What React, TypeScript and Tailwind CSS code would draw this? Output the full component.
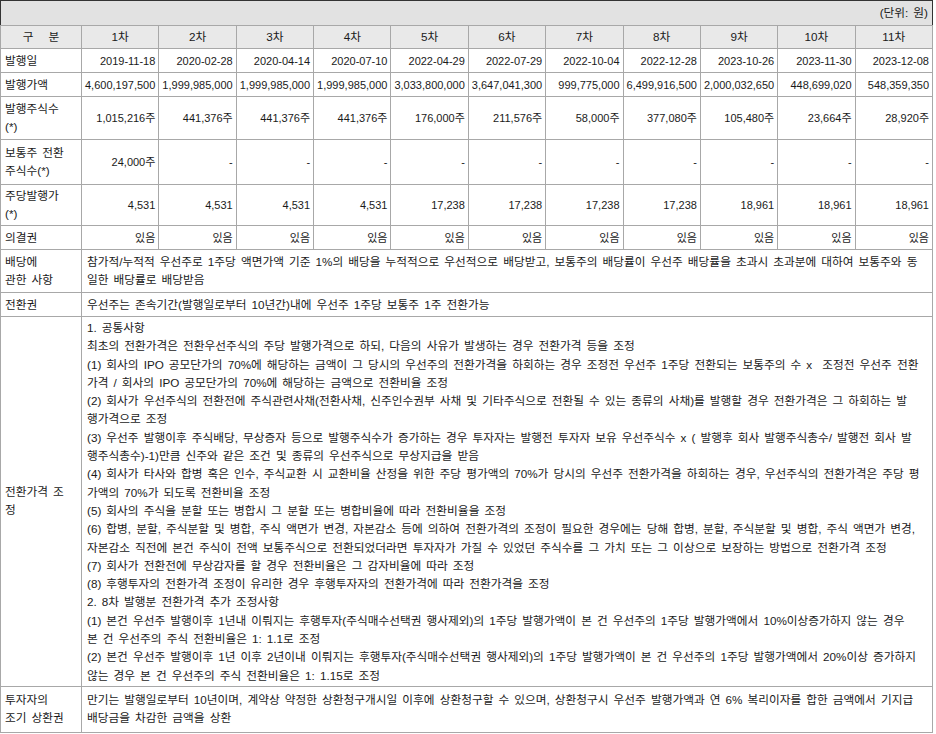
import React from "react";

const rounds = ["1차", "2차", "3차", "4차", "5차", "6차", "7차", "8차", "9차", "10차", "11차"];

const numericRows: { label: React.ReactNode; values: string[]; h: string }[] = [
  {
    label: "발행일",
    h: "h-[24px]",
    values: ["2019-11-18", "2020-02-28", "2020-04-14", "2020-07-10", "2022-04-29", "2022-07-29", "2022-10-04", "2022-12-28", "2023-10-26", "2023-11-30", "2023-12-08"],
  },
  {
    label: "발행가액",
    h: "h-[24px]",
    values: ["4,600,197,500", "1,999,985,000", "1,999,985,000", "1,999,985,000", "3,033,800,000", "3,647,041,300", "999,775,000", "6,499,916,500", "2,000,032,650", "448,699,020", "548,359,350"],
  },
  {
    label: (<>발행주식수<br />(*)</>),
    h: "h-[43px]",
    values: ["1,015,216주", "441,376주", "441,376주", "441,376주", "176,000주", "211,576주", "58,000주", "377,080주", "105,480주", "23,664주", "28,920주"],
  },
  {
    label: (<>보통주 전환<br />주식수(*)</>),
    h: "h-[45px]",
    values: ["24,000주", "-", "-", "-", "-", "-", "-", "-", "-", "-", "-"],
  },
  {
    label: (<>주당발행가<br />(*)</>),
    h: "h-[41px]",
    values: ["4,531", "4,531", "4,531", "4,531", "17,238", "17,238", "17,238", "17,238", "18,961", "18,961", "18,961"],
  },
  {
    label: "의결권",
    h: "h-[24px]",
    values: Array(11).fill("있음"),
  },
];

const adjustLines = [
  "1. 공통사항",
  "최초의 전환가격은 전환우선주식의 주당 발행가격으로 하되, 다음의 사유가 발생하는 경우 전환가격 등을 조정",
  "(1) 회사의 IPO 공모단가의 70%에 해당하는 금액이 그 당시의 우선주의 전환가격을 하회하는 경우 조정전 우선주 1주당 전환되는 보통주의 수 x  조정전 우선주 전환",
  "가격 / 회사의 IPO 공모단가의 70%에 해당하는 금액으로 전환비율 조정",
  "(2) 회사가 우선주식의 전환전에 주식관련사채(전환사채, 신주인수권부 사채 및 기타주식으로 전환될 수 있는 종류의 사채)를 발행할 경우 전환가격은 그 하회하는 발",
  "행가격으로 조정",
  "(3) 우선주 발행이후 주식배당, 무상증자 등으로 발행주식수가 증가하는 경우 투자자는 발행전 투자자 보유 우선주식수 x ( 발행후 회사 발행주식총수/ 발행전 회사 발",
  "행주식총수)-1)만큼 신주와 같은 조건 및 종류의 우선주식으로 무상지급을 받음",
  "(4) 회사가 타사와 합병 혹은 인수, 주식교환 시 교환비율 산정을 위한 주당 평가액의 70%가 당시의 우선주 전환가격을 하회하는 경우, 우선주식의 전환가격은 주당 평",
  "가액의 70%가 되도록 전환비율 조정",
  "(5) 회사의 주식을 분할 또는 병합시 그 분할 또는 병합비율에 따라 전환비율을 조정",
  "(6) 합병, 분할, 주식분할 및 병합, 주식 액면가 변경, 자본감소 등에 의하여 전환가격의 조정이 필요한 경우에는 당해 합병, 분할, 주식분할 및 병합, 주식 액면가 변경,",
  "자본감소 직전에 본건 주식이 전액 보통주식으로 전환되었더라면 투자자가 가질 수 있었던 주식수를 그 가치 또는 그 이상으로 보장하는 방법으로 전환가격 조정",
  "(7) 회사가 전환전에 무상감자를 할 경우 전환비율은 그 감자비율에 따라 조정",
  "(8) 후행투자의 전환가격 조정이 유리한 경우 후행투자자의 전환가격에 따라 전환가격을 조정",
  "2. 8차 발행분 전환가격 추가 조정사항",
  "(1) 본건 우선주 발행이후 1년내 이뤄지는 후행투자(주식매수선택권 행사제외)의 1주당 발행가액이 본 건 우선주의 1주당 발행가액에서 10%이상증가하지 않는 경우",
  "본 건 우선주의 주식 전환비율은 1: 1.1로 조정",
  "(2) 본건 우선주 발행이후 1년 이후 2년이내 이뤄지는 후행투자(주식매수선택권 행사제외)의 1주당 발행가액이 본 건 우선주의 1주당 발행가액에서 20%이상 증가하지",
  "않는 경우 본 건 우선주의 주식 전환비율은 1: 1.15로 조정",
];

function Lines({ lines }: { lines: string[] }) {
  return (
    <>
      {lines.map((l, i) => (
        <div key={i} className="whitespace-pre">{l}</div>
      ))}
    </>
  );
}

export default function App() {
  const cell = "border border-[#a8a8a8] px-[4px] align-middle";
  const num = "border border-[#a8a8a8] pl-[2px] pr-[3px] align-middle text-right whitespace-nowrap text-[11px] [word-spacing:0px]";
  return (
    <div className="w-[936px] h-[734px] bg-white text-[#1a1a1a] text-[11.7px] leading-[18px] [font-family:'Liberation_Sans','Noto_Sans_CJK_KR',sans-serif] [word-spacing:1.8px]">
      <table className="w-[933px] table-fixed border-collapse border border-[#333]">
        <colgroup>
          <col className="w-[81px]" />
          {rounds.map((r) => (
            <col key={r} />
          ))}
        </colgroup>
        <tbody>
          <tr className="h-[25px] bg-[#e2e2e2]">
            <td colSpan={12} className="border-b border-[#a8a8a8] px-[4px] text-right">(단위: 원)</td>
          </tr>
          <tr className="h-[23px] bg-[#e9e9e9]">
            <td className={`${cell} text-center whitespace-pre`}>구   분</td>
            {rounds.map((r) => (
              <td key={r} className={`${cell} text-center`}>{r}</td>
            ))}
          </tr>
          {numericRows.map((row, i) => (
            <tr key={i} className={row.h}>
              <td className={`${cell} text-left`}>{row.label}</td>
              {row.values.map((v, j) => (
                <td key={j} className={num}>{v}</td>
              ))}
            </tr>
          ))}
          <tr className="h-[43px]">
            <td className={cell}>배당에<br />관한 사항</td>
            <td colSpan={11} className={`${cell} pl-[5px]`}>
              <Lines
                lines={[
                  "참가적/누적적 우선주로 1주당 액면가액 기준 1%의 배당을 누적적으로 우선적으로 배당받고, 보통주의 배당률이 우선주 배당률을 초과시 초과분에 대하여 보통주와 동",
                  "일한 배당률로 배당받음",
                ]}
              />
            </td>
          </tr>
          <tr className="h-[24px]">
            <td className={cell}>전환권</td>
            <td colSpan={11} className={`${cell} pl-[5px]`}>
              우선주는 존속기간(발행일로부터 10년간)내에 우선주 1주당 보통주 1주 전환가능
            </td>
          </tr>
          <tr className="h-[369px]">
            <td className={cell}>전환가격 조<br />정</td>
            <td colSpan={11} className={`${cell} pl-[5px] pt-[2px] pb-[1px] leading-[18.3px]`}>
              <Lines lines={adjustLines} />
            </td>
          </tr>
          <tr className="h-[46px]">
            <td className={cell}>투자자의<br />조기 상환권</td>
            <td colSpan={11} className={`${cell} pl-[5px]`}>
              <Lines
                lines={[
                  "만기는 발행일로부터 10년이며, 계약상 약정한 상환청구개시일 이후에 상환청구할 수 있으며, 상환청구시 우선주 발행가액과 연 6% 복리이자를 합한 금액에서 기지급",
                  "배당금을 차감한 금액을 상환",
                ]}
              />
            </td>
          </tr>
        </tbody>
      </table>
    </div>
  );
}
